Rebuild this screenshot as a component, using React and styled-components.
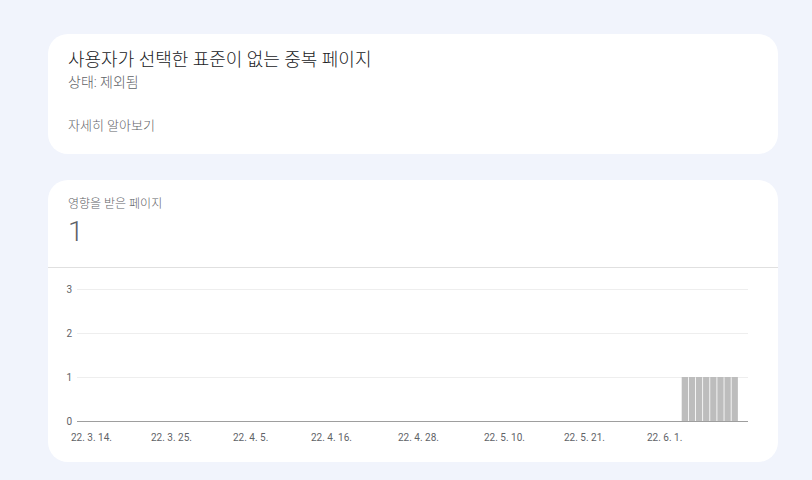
import React from 'react'
import styled, { createGlobalStyle } from 'styled-components'

const GlobalStyle = createGlobalStyle`
  html, body {
    margin: 0;
    padding: 0;
    background: #f1f4fc;
    font-family: Roboto, "Noto Sans CJK KR", "Noto Sans", sans-serif;
  }
`

const Page = styled.div`
  display: flex;
  flex-direction: column;
  gap: 26px;
  width: 730px;
  padding: 34px 0 18px 48px;
`

const Card = styled.div`
  background: #fff;
  border-radius: 20px;
  overflow: hidden;
`

const Summary = styled.div`
  display: flex;
  flex-direction: column;
  padding: 14px 20px 18px;
`

const Title = styled.div`
  font-size: 18px;
  line-height: 24px;
  font-weight: 300;
  color: #202124;
`

const Status = styled.div`
  font-size: 14px;
  line-height: 20px;
  font-weight: 300;
  color: #5f6368;
`

const LearnMore = styled.a`
  margin-top: 24px;
  font-size: 13px;
  line-height: 20px;
  font-weight: 300;
  color: #5f6368;
  text-decoration: none;
`

const Metric = styled.div`
  display: flex;
  flex-direction: column;
  gap: 4px;
  padding: 16px 20px 19px;
  border-bottom: 1px solid #e0e0e0;
`

const MetricLabel = styled.div`
  font-size: 12px;
  line-height: 16px;
  font-weight: 300;
  color: #5f6368;
`

const MetricValue = styled.div`
  font-size: 28px;
  line-height: 32px;
  font-weight: 300;
  color: #5f6368;
`

const ChartWrap = styled.div`
  height: 194px;
`

const yTicks = [3, 2, 1, 0]
const xLabels = [
  ['22. 3. 14.', 23],
  ['22. 3. 25.', 103],
  ['22. 4. 5.', 185],
  ['22. 4. 16.', 263],
  ['22. 4. 28.', 350],
  ['22. 5. 10.', 436],
  ['22. 5. 21.', 516],
  ['22. 6. 1.', 599],
]

const Chart = () => {
  const top = 21
  const step = 44
  const bars = Array.from({ length: 8 }, (_, i) => 633.7 + i * 7.125)
  return (
    <svg width="730" height="194" style={{ display: 'block' }}>
      {yTicks.map((t, i) => (
        <g key={t}>
          <line
            x1="29"
            x2="700"
            y1={top + i * step + 0.5}
            y2={top + i * step + 0.5}
            stroke={t === 0 ? '#9e9e9e' : '#eeeeee'}
            strokeWidth="1"
          />
          <text
            x="24"
            y={top + i * step + 3.5}
            textAnchor="end"
            fontSize="10"
            fill="#5f6368"
            fontFamily="Roboto, sans-serif"
          >
            {t}
          </text>
        </g>
      ))}
      {bars.map((x) => (
        <rect key={x} x={x} y={top + 2 * step} width="6.3" height={step} fill="#bdbdbd" />
      ))}
      {xLabels.map(([label, x]) => (
        <text
          key={label}
          x={x}
          y="173"
          fontSize="10"
          fill="#5f6368"
          fontFamily="Roboto, sans-serif"
        >
          {label}
        </text>
      ))}
    </svg>
  )
}

const App = () => {
  return (
    <>
      <GlobalStyle />
      <Page>
        <Card>
          <Summary>
            <Title>사용자가 선택한 표준이 없는 중복 페이지</Title>
            <Status>상태: 제외됨</Status>
            <LearnMore href="#">자세히 알아보기</LearnMore>
          </Summary>
        </Card>
        <Card>
          <Metric>
            <MetricLabel>영향을 받은 페이지</MetricLabel>
            <MetricValue>1</MetricValue>
          </Metric>
          <ChartWrap>
            <Chart />
          </ChartWrap>
        </Card>
      </Page>
    </>
  )
}

export default App
